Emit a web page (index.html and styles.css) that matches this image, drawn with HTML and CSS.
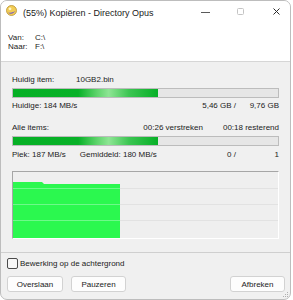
FILE: index.html
```html
<!DOCTYPE html>
<html lang="nl">

<head>
    <meta charset="UTF-8">
    <link rel="stylesheet" href="styles.css">
    <title>Kopiëren - Directory Opus</title>
</head>

<body>

    <div class="window">
        <div class="titlebar">
            <svg class="app-icon" width="11" height="11" viewBox="0 0 11 11">
                <circle cx="5.5" cy="5.5" r="5" fill="#f2cd55" stroke="#b8912e" stroke-width="0.8" />
                <path d="M2 7.5 C4 9.5 8 9 9.6 5.6 C8 7.6 5 8 2 7.5 Z" fill="#6b55c8" />
                <circle cx="4" cy="3.8" r="1.4" fill="#fff6c8" />
            </svg>
            <span class="title">(55%) Kopiëren - Directory Opus</span>
            <svg class="ctl ctl-min" width="9" height="3" viewBox="0 0 9 3">
                <line x1="0" y1="1.5" x2="9" y2="1.5" stroke="#5a5a5a" stroke-width="1" />
            </svg>
            <svg class="ctl ctl-max" width="7" height="7" viewBox="0 0 7 7">
                <rect x="0.5" y="0.5" width="6" height="6" rx="1" fill="none" stroke="#c4c4c4" stroke-width="1" />
            </svg>
            <svg class="ctl ctl-close" width="7" height="7" viewBox="0 0 7 7">
                <path d="M0.5 0.5 L6.5 6.5 M6.5 0.5 L0.5 6.5" stroke="#2b2b2b" stroke-width="1" />
            </svg>
        </div>

        <div class="paths">
            <div class="path-row"><span class="path-label">Van:</span><span>C:\</span></div>
            <div class="path-row"><span class="path-label">Naar:</span><span>F:\</span></div>
        </div>

        <div class="content">
            <div class="row">
                <span class="item-label">Huidig item:</span>
                <span>10GB2.bin</span>
            </div>
            <div class="bar"><div class="fill" style="width: 54.7%"></div></div>
            <div class="row after-bar">
                <span>Huidige: 184 MB/s</span>
                <span class="push">5,46 GB /</span>
                <span class="num">9,76 GB</span>
            </div>

            <div class="row section">
                <span>Alle items:</span>
                <span class="push">00:26 verstreken</span>
                <span class="remain">00:18 resterend</span>
            </div>
            <div class="bar"><div class="fill" style="width: 54.7%"></div></div>
            <div class="row after-bar2">
                <span>Piek: 187 MB/s</span>
                <span class="avg">Gemiddeld: 180 MB/s</span>
                <span class="push">0 /</span>
                <span class="num">1</span>
            </div>

            <div class="graph">
                <svg width="265" height="66" viewBox="0 0 265 66">
                    <line x1="107" y1="16.5" x2="265" y2="16.5" stroke="#e2e2e2" />
                    <line x1="107" y1="32.5" x2="265" y2="32.5" stroke="#e2e2e2" />
                    <line x1="107" y1="48.5" x2="265" y2="48.5" stroke="#e2e2e2" />
                    <polygon points="0,10 29,10 31,12 107,12 107,66 0,66" fill="#2bf84f" />
                    <line x1="0" y1="16.5" x2="107" y2="16.5" stroke="#6ef98a" />
                    <line x1="0" y1="32.5" x2="107" y2="32.5" stroke="#6ef98a" />
                    <line x1="0" y1="48.5" x2="107" y2="48.5" stroke="#6ef98a" />
                </svg>
            </div>
        </div>

        <div class="footer">
            <label class="check-row">
                <span class="checkbox"></span>
                <span>Bewerking op de achtergrond</span>
            </label>
            <div class="buttons">
                <button type="button" class="btn btn-skip">Overslaan</button>
                <button type="button" class="btn btn-pause">Pauzeren</button>
                <button type="button" class="btn btn-abort">Afbreken</button>
            </div>
            <svg class="grip" width="6" height="6" viewBox="0 0 6 6">
                <rect x="4" y="0" width="1" height="1" fill="#b0b0b0" />
                <rect x="2" y="2" width="1" height="1" fill="#b0b0b0" />
                <rect x="4" y="2" width="1" height="1" fill="#b0b0b0" />
                <rect x="0" y="4" width="1" height="1" fill="#b0b0b0" />
                <rect x="2" y="4" width="1" height="1" fill="#b0b0b0" />
                <rect x="4" y="4" width="1" height="1" fill="#b0b0b0" />
            </svg>
        </div>
    </div>

</body>

</html>
```

FILE: styles.css
```css
body {
    margin: 0;
    padding: 0;
    background-color: #fff;
    font-family: 'Liberation Sans', Arial, sans-serif;
    color: #1b1b1b;
}

.window {
    position: relative;
    box-sizing: border-box;
    width: 291px;
    height: 300px;
    border: 1px solid #bdbdbd;
    border-radius: 7px;
    overflow: hidden;
    background-color: #f0f0f0;
    display: flex;
    flex-direction: column;
}

/* title bar */

.titlebar {
    display: flex;
    align-items: flex-start;
    height: 25px;
    padding-left: 5px;
    background-color: #fff;
}

.app-icon {
    margin-top: 4px;
    flex: none;
}

.title {
    margin-left: 6px;
    margin-top: 6px;
    font-size: 9px;
    line-height: 12px;
    color: #1a1a1a;
    white-space: nowrap;
}

.ctl {
    flex: none;
}

.ctl-min {
    margin-left: auto;
    margin-top: 10px;
}

.ctl-max {
    margin-left: 27px;
    margin-top: 7px;
}

.ctl-close {
    margin-left: 29px;
    margin-top: 7px;
    margin-right: 10px;
}

/* source / target */

.paths {
    background-color: #fff;
    padding: 7px 7px 10px;
    border-bottom: 1px solid #d6d6d6;
    font-size: 8px;
}

.path-row {
    display: flex;
    height: 9px;
    line-height: 9px;
}

.path-label {
    width: 27px;
}

/* progress section */

.content {
    padding: 13px 11px 13px;
    font-size: 8px;
}

.row {
    display: flex;
    height: 10px;
    line-height: 10px;
    white-space: nowrap;
}

.item-label {
    width: 64px;
}

.push {
    margin-left: auto;
}

.num {
    width: 43px;
    text-align: right;
}

.remain {
    margin-left: 20px;
}

.avg {
    margin-left: 14px;
}

.after-bar {
    margin-top: 3px;
}

.after-bar2 {
    margin-top: 4px;
}

.section {
    margin-top: 12px;
}

.bar {
    box-sizing: border-box;
    height: 10px;
    margin-top: 3px;
    border: 1px solid #bcbcbc;
    background-color: #e6e6e6;
}

.fill {
    height: 100%;
    background: linear-gradient(to right, #06b025 0%, #08b128 45%, #5fd46c 58%, #8ee594 66%, #3cc552 80%, #07b027 100%);
}

.graph {
    margin-top: 11px;
    height: 66px;
    border-top: 1px solid #a6a6a6;
    border-left: 1px solid #a6a6a6;
    border-right: 1px solid #fff;
    border-bottom: 1px solid #fff;
    background-color: #efefef;
}

.graph svg {
    display: block;
}

/* bottom */

.footer {
    flex: 1;
    position: relative;
    border-top: 1px solid #cfcfcf;
    padding: 5px 5px 0 6px;
    font-size: 8px;
}

.check-row {
    display: flex;
    align-items: center;
    height: 11px;
    line-height: 11px;
}

.checkbox {
    box-sizing: border-box;
    width: 11px;
    height: 11px;
    border: 1px solid #4a4a4a;
    border-radius: 2px;
    background-color: #f6f6f6;
    margin-right: 2px;
}

.buttons {
    display: flex;
    margin-top: 7px;
}

.btn {
    box-sizing: border-box;
    height: 16px;
    padding: 0;
    font-family: 'Liberation Sans', Arial, sans-serif;
    font-size: 8px;
    color: #1b1b1b;
    background-color: #fdfdfd;
    border: 1px solid #d2d2d2;
    border-radius: 3px;
}

.btn-skip {
    width: 56px;
}

.btn-pause {
    width: 55px;
    margin-left: 8px;
}

.btn-abort {
    width: 55px;
    margin-left: auto;
}

.grip {
    position: absolute;
    right: 1px;
    bottom: 1px;
}
```
